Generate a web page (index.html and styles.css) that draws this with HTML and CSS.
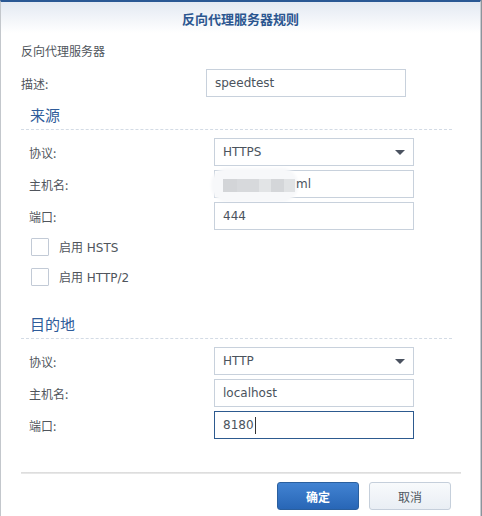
FILE: index.html
```html
<!DOCTYPE html>
<html lang="zh-CN">
<head>
<meta charset="utf-8">
<title>反向代理服务器规则</title>
<link rel="stylesheet" href="styles.css">
</head>
<body>
<div class="dialog">
  <div class="header"><span class="title">反向代理服务器规则</span></div>
  <div class="content">
    <div class="subtitle">反向代理服务器</div>
    <div class="row first">
      <span class="label">描述:</span>
      <div class="field">speedtest</div>
    </div>

    <div class="section">
      <div class="sec-head">来源</div>
      <div class="sec-body">
        <div class="row">
          <span class="label">协议:</span>
          <div class="field select">HTTPS<span class="arrow"></span></div>
        </div>
        <div class="row gap">
          <span class="label">主机名:</span>
          <div class="field"><span class="blur"><span class="blk b1"></span><span class="blk b2"></span><span class="blk b3"></span><span class="blk b4"></span><span class="blk b5"></span></span>ml</div>
        </div>
        <div class="row gap">
          <span class="label">端口:</span>
          <div class="field">444</div>
        </div>
        <div class="check first-check"><span class="box"></span><span class="check-label">启用 HSTS</span></div>
        <div class="check"><span class="box"></span><span class="check-label">启用 HTTP/2</span></div>
      </div>
    </div>

    <div class="section dest">
      <div class="sec-head">目的地</div>
      <div class="sec-body">
        <div class="row">
          <span class="label">协议:</span>
          <div class="field select">HTTP<span class="arrow"></span></div>
        </div>
        <div class="row gap">
          <span class="label">主机名:</span>
          <div class="field">localhost</div>
        </div>
        <div class="row gap">
          <span class="label">端口:</span>
          <div class="field focused">8180<span class="caret"></span></div>
        </div>
      </div>
    </div>
  </div>
  <div class="footer">
    <div class="footer-line"></div>
    <div class="buttons">
      <button class="btn primary">确定</button>
      <button class="btn">取消</button>
    </div>
  </div>
</div>
</body>
</html>
```

FILE: styles.css
```css
html, body {
  margin: 0;
  padding: 0;
}
body {
  width: 482px;
  height: 516px;
  background: #8c939b;
  overflow: hidden;
  font-family: "DejaVu Sans", "Noto Sans CJK SC", sans-serif;
  font-size: 12px;
  color: #4b535d;
}
.dialog {
  width: 479px;
  height: 514px;
  background: #ffffff;
  border-top: 2px solid #2a5894;
  border-left: 1px solid #c3c7cc;
  border-right: 1px solid #c9cdd2;
  display: flex;
  flex-direction: column;
}
.header {
  height: 31px;
  background: linear-gradient(#e3e9f2, #ffffff);
  display: flex;
  align-items: center;
  justify-content: center;
}
.title {
  font-family: "Noto Sans CJK SC", sans-serif;
  font-weight: bold;
  font-size: 13px;
  color: #2b5690;
  margin-top: 1px;
}
.content {
  padding: 9px 0 0 20px;
  display: flex;
  flex-direction: column;
}
.subtitle {
  height: 18px;
  line-height: 18px;
  font-family: "Noto Sans CJK SC", sans-serif;
  color: #50555c;
}
.row {
  display: flex;
  align-items: center;
  height: 28px;
}
.row.first {
  margin-top: 9px;
}
.row.gap {
  margin-top: 4px;
}
.label {
  width: 185px;
  font-family: "Noto Sans CJK SC", sans-serif;
  color: #50555c;
}
.field {
  box-sizing: border-box;
  width: 200px;
  height: 28px;
  border: 1px solid #c8d1dc;
  padding-left: 8px;
  display: flex;
  align-items: center;
  color: #4b535d;
}
.field.select {
  justify-content: space-between;
  padding-right: 8px;
}
.arrow {
  width: 0;
  height: 0;
  border-left: 5px solid transparent;
  border-right: 5px solid transparent;
  border-top: 5px solid #4a5260;
  margin-top: 1px;
}
.field.focused {
  border-color: #2d5a8f;
}
.caret {
  width: 1px;
  height: 17px;
  background: #333;
  margin-left: 1px;
}
.blur {
  display: flex;
  align-items: center;
  margin-left: -10px;
  margin-top: 2px;
  height: 30px;
  padding: 0 1px 0 10px;
  border-radius: 14px;
  background: #f7f8fa;
  box-shadow: 0 0 3px 2px #f7f8fa;
}
.blk {
  display: block;
  height: 13px;
  filter: blur(0.6px);
}
.b1 { width: 14px; background: #d3d5d8; }
.b2 { width: 22px; background: #d7d9dc; }
.b3 { width: 12px; background: #e2e4e6; }
.b4 { width: 13px; background: #d4d6d9; }
.b5 { width: 11px; background: #e0e2e4; }
.section {
  width: 431px;
  margin-top: 8px;
  display: flex;
  flex-direction: column;
}
.section.dest {
  margin-top: 28px;
}
.sec-head {
  box-sizing: border-box;
  height: 25px;
  line-height: 20px;
  padding-left: 9px;
  border-bottom: 1px dashed #d3dbe5;
  font-family: "Noto Sans CJK SC", sans-serif;
  font-size: 15px;
  color: #2f5c9a;
}
.sec-body {
  padding: 8px 0 0 8px;
  display: flex;
  flex-direction: column;
}
.check {
  display: flex;
  align-items: center;
  height: 18px;
  margin-top: 12px;
  padding-left: 2px;
}
.check.first-check {
  margin-top: 8px;
}
.box {
  box-sizing: border-box;
  width: 18px;
  height: 18px;
  border: 1px solid #c2cad6;
  border-radius: 1px;
  background: #fff;
}
.check-label {
  margin-left: 10px;
  margin-top: -1px;
  font-family: "DejaVu Sans", "Noto Sans CJK SC", sans-serif;
  color: #50555c;
}
.footer {
  margin-top: 33px;
  padding-left: 20px;
  display: flex;
  flex-direction: column;
}
.footer-line {
  width: 440px;
  height: 2px;
  background: linear-gradient(#d9d9d9, #ececec);
}
.buttons {
  margin-top: 8px;
  width: 430px;
  display: flex;
  justify-content: flex-end;
  gap: 10px;
}
.btn {
  box-sizing: border-box;
  width: 82px;
  height: 28px;
  border: 1px solid #c5cfdb;
  border-radius: 3px;
  background: linear-gradient(#f8fafc, #e9eef4);
  font-family: "Noto Sans CJK SC", sans-serif;
  font-size: 12px;
  color: #4f5761;
  padding: 0;
}
.btn.primary {
  border-color: #2a5f9e;
  background: linear-gradient(#4283d2, #2866b6);
  color: #ffffff;
  font-weight: bold;
}
```
